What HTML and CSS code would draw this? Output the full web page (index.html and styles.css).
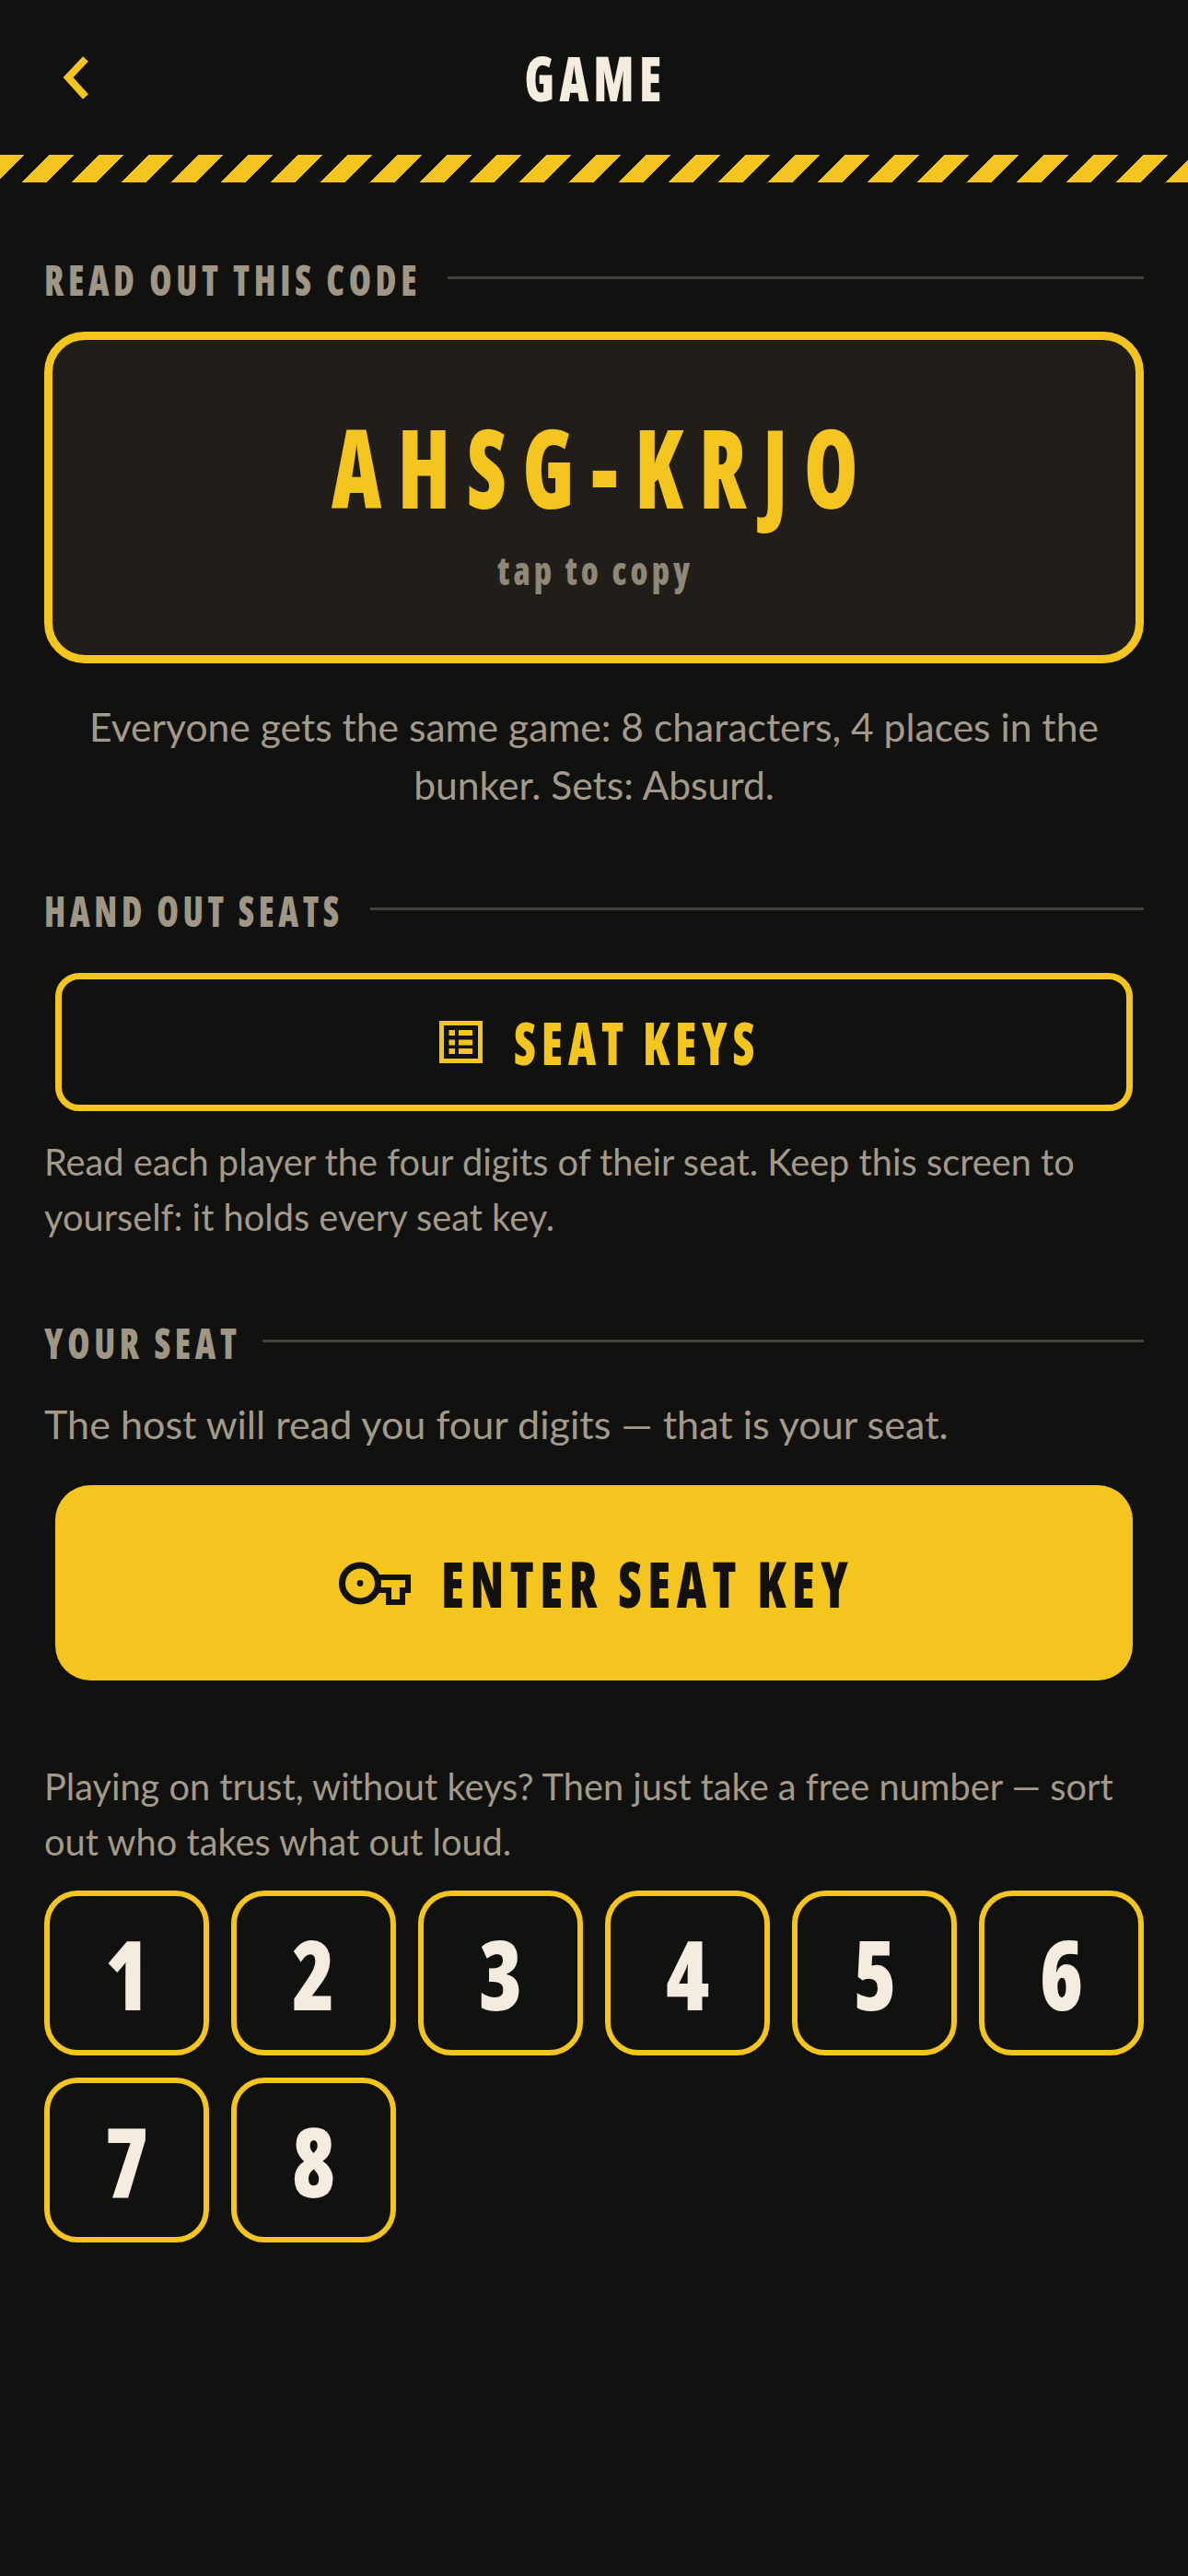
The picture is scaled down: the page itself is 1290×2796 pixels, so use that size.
FILE: index.html
```html
<!DOCTYPE html>
<html lang="en">
<head>
<meta charset="utf-8">
<title>Game</title>
<link rel="stylesheet" href="styles.css">
</head>
<body>
<header class="topbar">
  <button class="back" aria-label="Back">
    <svg viewBox="0 0 36 48" width="36" height="48"><path d="M29 4 L10 24 L29 45" fill="none" stroke="#f5c51f" stroke-width="8"/></svg>
  </button>
  <h1 class="title">GAME</h1>
</header>
<div class="hazard"></div>
<main class="content">
  <div class="label label-code"><span class="label-text">READ OUT THIS CODE</span><i class="rule"></i></div>
  <div class="code-card">
    <div class="code">AHSG-KRJO</div>
    <div class="copy">tap to copy</div>
  </div>
  <p class="note note-center">Everyone gets the same game: 8 characters, 4 places in the bunker. Sets: Absurd.</p>

  <div class="label label-hand"><span class="label-text">HAND OUT SEATS</span><i class="rule"></i></div>
  <button class="btn-outline">
    <svg viewBox="0 0 47 46" width="47" height="46">
      <rect x="2.5" y="2.5" width="42" height="41" fill="none" stroke="#f5c51f" stroke-width="5"/>
      <path d="M10.5 10h6.5v6h-6.5zM10.5 20.5h6.5v6h-6.5zM10.5 30h6.5v6h-6.5zM21 10h15v6H21zM21 20.5h15v6H21zM21 30h15v6H21z" fill="#f5c51f"/>
    </svg>
    <span class="btn-text">SEAT KEYS</span>
  </button>
  <p class="note note-small note-keys">Read each player the four digits of their seat. Keep this screen to yourself: it holds every seat key.</p>

  <div class="label label-seat"><span class="label-text">YOUR SEAT</span><i class="rule"></i></div>
  <p class="note note-host">The host will read you four digits — that is your seat.</p>
  <button class="btn-solid">
    <svg viewBox="0 0 78 47" width="78" height="47">
      <circle cx="23" cy="23.5" r="19.5" fill="none" stroke="#12110f" stroke-width="7"/>
      <circle cx="23" cy="23.5" r="3.4" fill="#12110f"/>
      <path d="M41 17H75V31H69V44H54V31H41" fill="none" stroke="#12110f" stroke-width="6"/>
    </svg>
    <span class="btn-text">ENTER SEAT KEY</span>
  </button>
  <p class="note note-small note-trust">Playing on trust, without keys? Then just take a free number — sort out who takes what out loud.</p>
  <div class="seats">
    <button class="seat"><span>1</span></button>
    <button class="seat"><span>2</span></button>
    <button class="seat"><span>3</span></button>
    <button class="seat"><span>4</span></button>
    <button class="seat"><span>5</span></button>
    <button class="seat"><span>6</span></button>
    <button class="seat"><span>7</span></button>
    <button class="seat"><span>8</span></button>
  </div>
</main>
</body>
</html>
```
FILE: styles.css
```css
* { box-sizing: border-box; }
html, body { margin: 0; }
body {
  min-height: 2796px;
  background: #111110;
  color: #f3ecdf;
  font-family: "Lato", sans-serif;
}
button { font: inherit; color: inherit; background: none; border: 0; padding: 0; }

/* display face used for every heading and control, narrowed a little further below */
.title, .label, .code, .copy, .btn-outline, .btn-solid, .seat {
  font-family: "Open Sans", sans-serif;
  font-stretch: 75%;
  font-weight: 800;
}

.topbar {
  height: 168px;
  display: grid;
  grid-template-columns: 1fr auto 1fr;
  align-items: center;
}
.back { justify-self: start; margin: 0 0 0 64px; width: 36px; height: 48px; }
.back svg { display: block; }
.title {
  margin: 0;
  padding-left: 4px;
  font-size: 67px;
  line-height: 1;
  letter-spacing: 6.5px;
  transform: scaleX(.82);
}

.hazard {
  height: 30px;
  background: repeating-linear-gradient(135deg, #f5c51f 0 19.09px, #111110 19.09px 38.18px);
}

.content { padding: 0 48px; }

.label {
  display: flex;
  align-items: center;
  gap: 30px;
  height: 54px;
  font-size: 46px;
  letter-spacing: 5.5px;
  color: #9f9686;
}
.label-text {
  white-space: nowrap;
  transform: scaleX(.85);
  transform-origin: left center;
}
.rule { flex: 1; height: 3px; margin-top: -3px; background: #45403a; }
.label-code { margin-top: 78px; }
.label-code .label-text { width: 408px; }
.label-hand { margin-top: 78px; }
.label-hand .label-text { width: 324px; transform: scaleX(.83); }
.label-seat { margin-top: 79px; }
.label-seat .label-text { width: 207px; }

.code-card {
  margin-top: 30px;
  height: 360px;
  border: 9px solid #f5c51f;
  border-radius: 44px;
  background: #211e19;
  text-align: center;
  padding-top: 73px;
}
.code {
  font-size: 118px;
  line-height: 130px;
  letter-spacing: 22px;
  text-indent: 24px;
  color: #f5c51f;
  transform: scaleX(.8);
}
.copy {
  margin-top: 22px;
  font-size: 42px;
  line-height: 50px;
  letter-spacing: 4.6px;
  text-indent: 4px;
  color: #8f8777;
  transform: scaleX(.88);
}

.note { margin: 0; font-size: 43.1px; line-height: 60px; color: #a39a89; }
.note-small { font-size: 39.75px; }
.note-center { margin-top: 37px; font-size: 42.6px; line-height: 63px; text-align: center; padding: 0 30px; }
.note-keys { margin-top: 25px; }
.note-host { margin-top: 31px; }
.note-trust { margin-top: 85px; }

.btn-outline, .btn-solid {
  display: flex;
  align-items: center;
  justify-content: center;
  width: 1170px;
  margin-left: 12px;
}
.btn-text {
  white-space: nowrap;
  transform: scaleX(.82);
  transform-origin: left center;
}
.btn-outline {
  gap: 34px;
  height: 150px;
  margin-top: 41px;
  border: 7px solid #f5c51f;
  border-radius: 26px;
  font-size: 63px;
  letter-spacing: 7px;
  color: #f5c51f;
}
.btn-outline .btn-text { width: 256px; transform: scaleX(.835); }
.btn-solid {
  gap: 33px;
  height: 212px;
  margin-top: 37px;
  border-radius: 38px;
  background: #f5c51f;
  color: #12110f;
  font-size: 69px;
  letter-spacing: 8px;
}
.btn-solid .btn-text { width: 444px; transform: scaleX(.815); }

.seats {
  display: grid;
  grid-template-columns: repeat(6, 179px);
  gap: 24px;
  margin-top: 23px;
}
.seat {
  height: 179px;
  border: 6px solid #f5c51f;
  border-radius: 36px;
  font-size: 104px;
}
.seat span { display: inline-block; transform: scaleX(.92); }
```
